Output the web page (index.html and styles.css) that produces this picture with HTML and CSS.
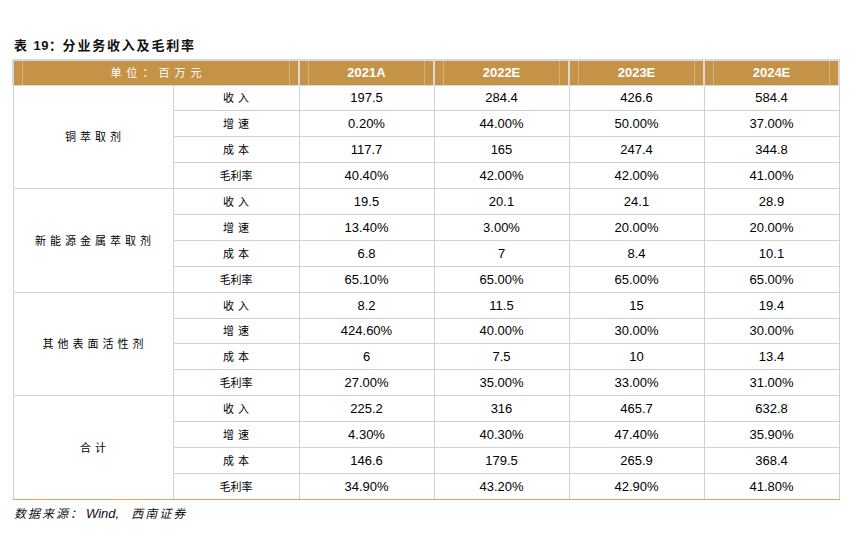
FILE: index.html
```html
<!DOCTYPE html>
<html lang="zh">
<head>
<meta charset="utf-8">
<link rel="stylesheet" href="styles.css">
</head>
<body>
<div class="page">
  <div class="title"><span class="tnum">表 19：</span>分业务收入及毛利率</div>
  <table class="tbl">
    <colgroup>
      <col class="c1"><col class="c2"><col class="cn"><col class="cn"><col class="cn"><col class="cn">
    </colgroup>
    <thead>
      <tr>
        <th colspan="2" class="unit">单位：百万元</th>
        <th>2021A</th><th>2022E</th><th>2023E</th><th>2024E</th>
      </tr>
    </thead>
    <tbody>
      <tr><td rowspan="4" class="grp">铜萃取剂</td><td class="lab two">收入</td><td>197.5</td><td>284.4</td><td>426.6</td><td>584.4</td></tr>
      <tr><td class="lab two">增速</td><td>0.20%</td><td>44.00%</td><td>50.00%</td><td>37.00%</td></tr>
      <tr><td class="lab two">成本</td><td>117.7</td><td>165</td><td>247.4</td><td>344.8</td></tr>
      <tr><td class="lab">毛利率</td><td>40.40%</td><td>42.00%</td><td>42.00%</td><td>41.00%</td></tr>

      <tr><td rowspan="4" class="grp">新能源金属萃取剂</td><td class="lab two">收入</td><td>19.5</td><td>20.1</td><td>24.1</td><td>28.9</td></tr>
      <tr><td class="lab two">增速</td><td>13.40%</td><td>3.00%</td><td>20.00%</td><td>20.00%</td></tr>
      <tr><td class="lab two">成本</td><td>6.8</td><td>7</td><td>8.4</td><td>10.1</td></tr>
      <tr><td class="lab">毛利率</td><td>65.10%</td><td>65.00%</td><td>65.00%</td><td>65.00%</td></tr>

      <tr><td rowspan="4" class="grp">其他表面活性剂</td><td class="lab two">收入</td><td>8.2</td><td>11.5</td><td>15</td><td>19.4</td></tr>
      <tr><td class="lab two">增速</td><td>424.60%</td><td>40.00%</td><td>30.00%</td><td>30.00%</td></tr>
      <tr><td class="lab two">成本</td><td>6</td><td>7.5</td><td>10</td><td>13.4</td></tr>
      <tr><td class="lab">毛利率</td><td>27.00%</td><td>35.00%</td><td>33.00%</td><td>31.00%</td></tr>

      <tr class="last"><td rowspan="4" class="grp">合计</td><td class="lab two">收入</td><td>225.2</td><td>316</td><td>465.7</td><td>632.8</td></tr>
      <tr><td class="lab two">增速</td><td>4.30%</td><td>40.30%</td><td>47.40%</td><td>35.90%</td></tr>
      <tr><td class="lab two">成本</td><td>146.6</td><td>179.5</td><td>265.9</td><td>368.4</td></tr>
      <tr class="end"><td class="lab">毛利率</td><td>34.90%</td><td>43.20%</td><td>42.90%</td><td>41.80%</td></tr>
    </tbody>
  </table>
  <div class="source">数据来源：<span class="lat">Wind,</span>西南证券</div>
</div>
</body>
</html>
```
FILE: styles.css
```css
html, body {
  margin: 0;
  padding: 0;
  background: #ffffff;
}

.page {
  width: 856px;
  height: 536px;
  padding: 37px 18px 0 12px;
  box-sizing: border-box;
  font-family: "Liberation Sans", "Noto Sans CJK SC", sans-serif;
  color: #000;
}

.title {
  margin: 0 0 5px 2px;
  font-family: "Noto Sans CJK SC", sans-serif;
  font-weight: bold;
  font-size: 13px;
  line-height: 16px;
  letter-spacing: 1.8px;
  color: #111;
}

.title .tnum {
  font-family: "Liberation Sans", "Noto Sans CJK SC", sans-serif;
  letter-spacing: 0.5px;
  word-spacing: 2px;
}

.tbl {
  width: 826px;
  border-collapse: collapse;
  table-layout: fixed;
}

.c1 { width: 160px; }
.c2 { width: 126px; }
.cn { width: 135px; }

.tbl th {
  height: 23.5px;
  padding: 0;
  background-color: #c59347;
  background-image:
    linear-gradient(to right,
      transparent 8px, rgba(255, 255, 255, 0.28) 8px, rgba(255, 255, 255, 0.28) 9px, transparent 9px,
      transparent calc(100% - 9px), rgba(255, 255, 255, 0.28) calc(100% - 9px), rgba(255, 255, 255, 0.28) calc(100% - 8px), transparent calc(100% - 8px));
  border: 2px solid #d8d8d8;
  border-bottom-width: 1px;
  color: #ffffff;
  font-weight: bold;
  font-size: 13px;
  line-height: 15px;
  text-align: center;
  vertical-align: middle;
}

.tbl th.unit {
  font-family: "Noto Sans CJK SC", sans-serif;
  font-weight: normal;
  font-size: 11px;
  letter-spacing: 5px;
  text-indent: 5px;
}

.tbl td {
  height: 24.9px;
  padding: 0;
  border: 1px solid #d2d2d2;
  font-size: 13px;
  text-align: center;
  vertical-align: middle;
  line-height: 15px;
}

.tbl td.grp {
  font-family: "Noto Sans CJK SC", sans-serif;
  font-size: 11px;
  letter-spacing: 4px;
  text-indent: 4px;
}

.tbl td.lab {
  font-family: "Noto Sans CJK SC", sans-serif;
  font-size: 11px;
  letter-spacing: 0;
}

.tbl td.lab.two {
  letter-spacing: 4px;
  text-indent: 4px;
}

.tbl tr.last td.grp,
.tbl tr.end td {
  border-bottom: 1px solid #dca45c;
}

.source {
  margin: 5px 0 0 2px;
  font-family: "Noto Sans CJK SC", sans-serif;
  font-style: italic;
  font-size: 12px;
  line-height: 16px;
  color: #111;
  letter-spacing: 2px;
}

.source .lat {
  font-family: "Liberation Sans", sans-serif;
  font-size: 13px;
  letter-spacing: 0;
  margin: 0 12px 0 2px;
}
```
